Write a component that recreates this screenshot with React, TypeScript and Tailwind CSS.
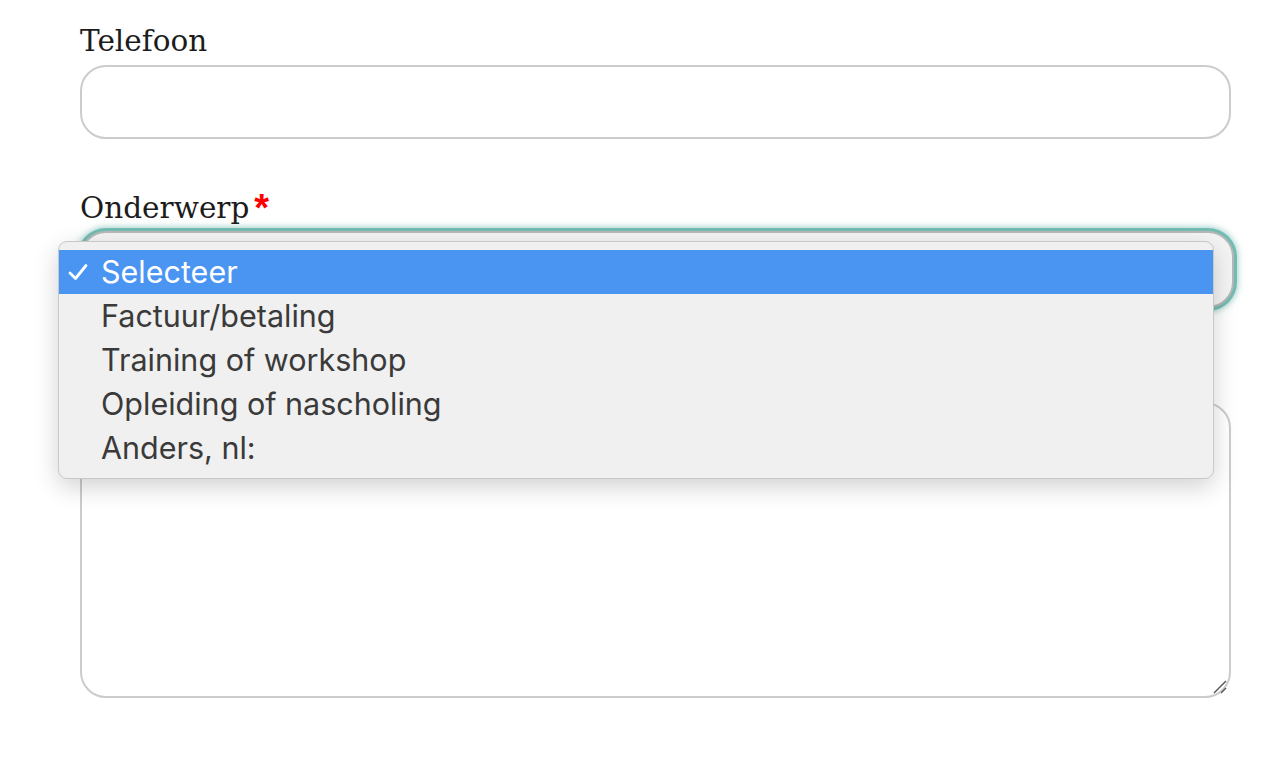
const options = [
  "Selecteer",
  "Factuur/betaling",
  "Training of workshop",
  "Opleiding of nascholing",
  "Anders, nl:",
];

const labelFont = { fontFamily: '"DejaVu Serif", "Liberation Serif", serif' };

export default function App() {
  return (
    <div className="min-h-screen w-[1284px] bg-white">
      <div className="relative pl-[80px] pr-[53px] pt-[22px]">
        <label
          className="block text-[29.5px] leading-[38px] font-light text-[#1c1c1c]"
          style={labelFont}
        >
          Telefoon
        </label>
        <div className="mt-[5px] h-[74px] rounded-[26px] border-2 border-[#cccccc] bg-white" />

        <label
          className="mt-[50px] flex items-start text-[29.5px] leading-[38px] text-[#1c1c1c]"
          style={labelFont}
        >
          Onderwerp
          <span
            className="ml-[5px] text-[38px] font-bold leading-[38px] text-[#ff0000]"
            style={{ fontFamily: '"Liberation Sans", sans-serif' }}
          >
            *
          </span>
        </label>
        <div className="mt-[4px] mr-[-3px] h-[77px] rounded-[26px] border-2 border-[#b8b8b8] bg-[#f4f4f4] shadow-[0_0_0_3px_#73bcb2,0_0_6px_4px_#73bcb2aa]" />

        <div className="relative mt-[94px] h-[296px] rounded-[26px] border-2 border-[#cccccc] bg-white">
          <svg
            className="absolute right-[1px] bottom-[1px]"
            width="16"
            height="16"
            viewBox="0 0 16 16"
          >
            <path d="M2 14 L14 2" stroke="#555" strokeWidth="1.5" />
            <path d="M9 14 L14 9" stroke="#555" strokeWidth="1.5" />
          </svg>
        </div>

        <div className="absolute left-[58px] top-[241px] w-[1156px] rounded-[9px] border border-[#c8c8c8] bg-[#f0f0f0] py-[8px] shadow-[0_8px_24px_rgba(0,0,0,0.18)]">
          {options.map((o, i) => (
            <div
              key={o}
              className={
                i === 0
                  ? "flex h-[44px] items-center bg-[#4a94f2] text-white"
                  : "flex h-[44px] items-center text-[#3a3a3a]"
              }
              style={{ fontFamily: 'Inter, "Liberation Sans", sans-serif' }}
            >
              <span className="flex w-[42px] justify-end pr-[13px]">
                {i === 0 && (
                  <svg width="20" height="18" viewBox="0 0 20 18">
                    <path
                      d="M2 10 L7.5 15.5 L18 2.5"
                      fill="none"
                      stroke="white"
                      strokeWidth="2.8"
                      strokeLinecap="round"
                      strokeLinejoin="round"
                    />
                  </svg>
                )}
              </span>
              <span className="text-[30.5px] leading-none">{o}</span>
            </div>
          ))}
        </div>
      </div>
    </div>
  );
}
